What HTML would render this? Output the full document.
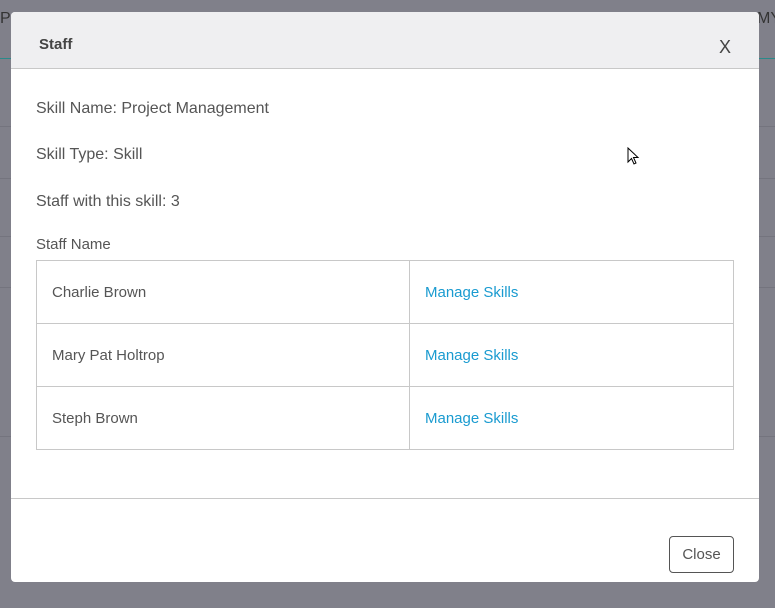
<!DOCTYPE html>
<html><head><style>
body{margin:0;width:775px;height:608px;background:#80808a;position:relative;overflow:hidden;font-family:"Liberation Sans",Arial,sans-serif;color:#555;}
.bgl{position:absolute;height:1px;background:#74747e;}
.modal{position:absolute;left:11px;top:12px;width:748px;height:570px;background:#fff;border-radius:4px;overflow:hidden;}
.hdr{height:56px;background:#efeff1;border-bottom:1px solid #c8c8c8;position:relative;}
.hdr b{position:absolute;left:28px;top:24px;font-size:15px;color:#444;}
.x{position:absolute;left:708px;top:25px;font-size:18px;color:#444;}
.t{position:absolute;left:25px;font-size:16px;color:#555;}
table{position:absolute;left:25px;top:248px;width:698px;border-collapse:collapse;font-size:15px;}
td{border:1px solid #c8c8c8;height:62px;padding:0 0 0 15px;color:#555;}
td a{color:#1a9bd0;text-decoration:none;}
.ft{position:absolute;left:0;top:486px;width:748px;border-top:1px solid #c8c8c8;}
.btn{position:absolute;left:658px;top:524px;width:65px;height:37px;border:1px solid #555;border-radius:4px;box-sizing:border-box;font-size:15px;text-align:center;line-height:36px;color:#555;}
</style></head><body>
<div style="position:absolute;left:0;top:10px;font-size:16px;color:#333">P</div>
<div style="position:absolute;left:757px;top:10px;font-size:16px;color:#333">MY</div>
<div class="bgl" style="left:0;top:58px;width:775px;background:#2a8a8a"></div>
<div class="bgl" style="left:0;top:126px;width:775px"></div>
<div class="bgl" style="left:0;top:178px;width:775px"></div>
<div class="bgl" style="left:0;top:236px;width:775px"></div>
<div class="bgl" style="left:0;top:287px;width:775px"></div>
<div class="bgl" style="left:0;top:436px;width:775px"></div>
<div class="modal">
<div class="hdr"><b>Staff</b><span class="x">X</span></div>
<div class="t" style="top:88px">Skill Name: Project Management</div>
<div class="t" style="top:134px">Skill Type: Skill</div>
<div class="t" style="top:181px">Staff with this skill: 3</div>
<div class="t" style="top:224px;font-size:15px">Staff Name</div>
<table>
<tr><td style="width:357px">Charlie Brown</td><td><a>Manage Skills</a></td></tr>
<tr><td>Mary Pat Holtrop</td><td><a>Manage Skills</a></td></tr>
<tr><td>Steph Brown</td><td><a>Manage Skills</a></td></tr>
</table>
<div class="ft"></div>
<div class="btn">Close</div>
<svg style="position:absolute;left:616px;top:135px" width="14" height="20" viewBox="0 0 14 20"><path d="M1 1 L1 15 L4.5 11.5 L7 17 L9 16 L6.5 10.5 L11 10.5 Z" fill="#fff" stroke="#000" stroke-width="1"/></svg>
</div>
</body></html>
